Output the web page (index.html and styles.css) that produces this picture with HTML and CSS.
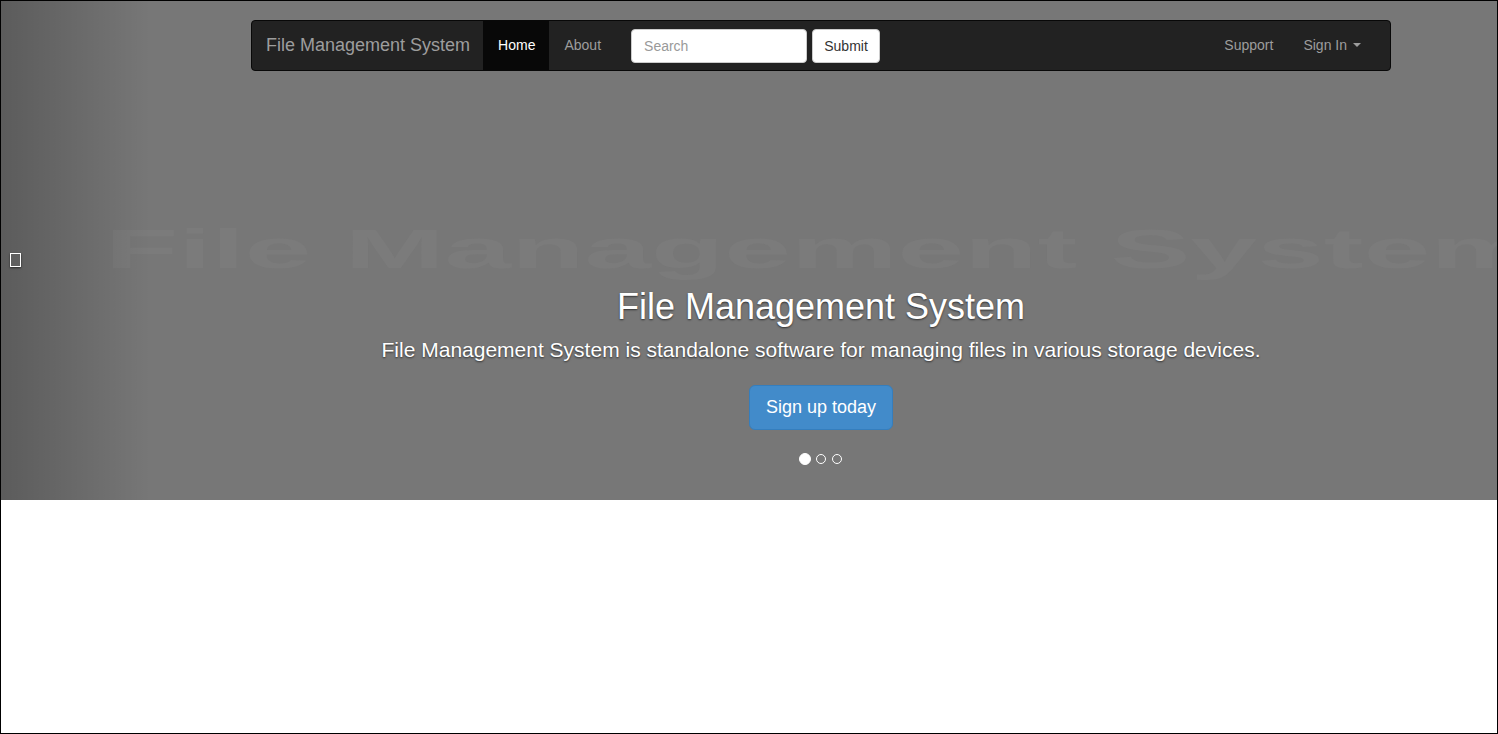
FILE: index.html
```html
<!DOCTYPE html>
<html lang="en">
<head>
<meta charset="utf-8">
<title>File Management System</title>
<link rel="stylesheet" href="styles.css">
</head>
<body>
<div class="frame">
  <div class="page">
    <section class="hero">
      <svg class="holder" width="1640" height="499" viewBox="0 0 1640 499" aria-hidden="true">
        <text x="104" y="267" textLength="1432" lengthAdjust="spacingAndGlyphs">File Management System</text>
      </svg>
      <a class="control-left" href="#"><span class="missing-glyph"></span></a>

      <div class="nav-container">
        <nav class="navbar">
          <a class="brand" href="#">File Management System</a>
          <ul class="nav">
            <li><a class="active" href="#">Home</a></li>
            <li><a href="#">About</a></li>
          </ul>
          <form class="nav-form">
            <input class="search" type="text" placeholder="Search">
            <button class="btn-submit" type="button">Submit</button>
          </form>
          <ul class="nav nav-right">
            <li><a href="#">Support</a></li>
            <li><a href="#">Sign In <span class="caret"></span></a></li>
          </ul>
        </nav>
      </div>

      <div class="caption">
        <h1>File Management System</h1>
        <p class="lead">File Management System is standalone software for managing files in various storage devices.</p>
        <a class="btn-primary" href="#">Sign up today</a>
        <ol class="indicators">
          <li class="on"></li>
          <li></li>
          <li></li>
        </ol>
      </div>
    </section>
  </div>
</div>
</body>
</html>
```
FILE: styles.css
```css
* { box-sizing: border-box; }
html, body { margin: 0; padding: 0; background: #fff; }
body {
  font-family: "Liberation Sans", Arial, Helvetica, sans-serif;
  font-size: 14px;
  color: #333;
}
.frame {
  width: 1498px;
  height: 734px;
  border: 1px solid #000;
  overflow: hidden;
}
.page {
  width: 1640px;
}
.hero {
  position: relative;
  height: 499px;
  background: #777;
  display: flex;
  flex-direction: column;
}
.holder {
  position: absolute;
  left: 0;
  top: 0;
}
.holder text {
  font-family: "Liberation Sans", Arial, sans-serif;
  font-weight: bold;
  font-size: 56px;
  fill: #7b7b7b;
}
.control-left {
  position: absolute;
  left: 0;
  top: 0;
  bottom: 0;
  width: 150px;
  background: linear-gradient(to right, rgba(0,0,0,0.23) 0%, rgba(0,0,0,0) 100%);
}
.missing-glyph {
  position: absolute;
  left: 9px;
  top: 252px;
  width: 11px;
  height: 14px;
  border: 1px solid #fff;
  box-shadow: 0 1px 2px rgba(0,0,0,.6);
}

.nav-container {
  position: relative;
  width: 1170px;
  margin: 19px auto 0;
  padding: 0 15px;
}
.navbar {
  display: flex;
  align-items: center;
  height: 51px;
  background: #222;
  border: 1px solid #080808;
  border-radius: 4px;
  padding-right: 14px;
}
.brand {
  display: block;
  padding: 14px 13px 15px 14px;
  font-size: 18px;
  line-height: 20px;
  color: #9d9d9d;
  text-decoration: none;
}
.nav {
  display: flex;
  list-style: none;
  margin: 0;
  padding: 0;
  align-self: stretch;
}
.nav li { display: flex; }
.nav a {
  display: flex;
  align-items: center;
  padding: 0 15px 2px;
  margin: -1px 0;
  line-height: 20px;
  color: #9d9d9d;
  text-decoration: none;
}
.nav a.active {
  background: #080808;
  color: #fff;
  padding: 0 14px 2px 15px;
}
.nav-form {
  display: flex;
  align-items: center;
  gap: 5px;
  margin-left: 15px;
}
.search {
  width: 176px;
  height: 34px;
  padding: 6px 12px;
  font-family: inherit;
  font-size: 14px;
  color: #555;
  background: #fff;
  border: 1px solid #ccc;
  border-radius: 4px;
  outline: none;
}
.search::placeholder { color: #999; }
.btn-submit {
  height: 34px;
  width: 68px;
  padding: 6px 0;
  font-family: inherit;
  font-size: 14px;
  color: #333;
  background: #fff;
  border: 1px solid #ccc;
  border-radius: 4px;
}
.nav-right { margin-left: auto; }
.caret {
  display: inline-block;
  width: 0;
  height: 0;
  margin-left: 6px;
  border-top: 4px solid #9d9d9d;
  border-left: 4px solid transparent;
  border-right: 4px solid transparent;
  vertical-align: middle;
}

.caption {
  position: relative;
  margin-top: auto;
  display: flex;
  flex-direction: column;
  align-items: center;
  padding-bottom: 35px;
  color: #fff;
  text-shadow: 0 1px 2px rgba(0,0,0,.6);
  text-align: center;
}
.caption h1 {
  margin: 0 0 8px;
  font-size: 36px;
  font-weight: 500;
  line-height: 40px;
}
.caption .lead {
  margin: 0 0 21px;
  font-size: 21px;
  line-height: 29px;
}
.btn-primary {
  display: inline-block;
  height: 45px;
  padding: 10px 16px;
  font-size: 18px;
  line-height: 23px;
  color: #fff;
  background: #428bca;
  border: 1px solid #357ebd;
  border-radius: 6px;
  text-decoration: none;
  text-shadow: none;
}
.indicators {
  display: flex;
  align-items: center;
  margin: 23px 0 0;
  padding: 0;
  list-style: none;
  height: 12px;
}
.indicators li {
  width: 10px;
  height: 10px;
  margin: 1px 3px;
  border: 1px solid #fff;
  border-radius: 50%;
}
.indicators li.on {
  width: 12px;
  height: 12px;
  margin: 0 2px;
  background: #fff;
}
```
